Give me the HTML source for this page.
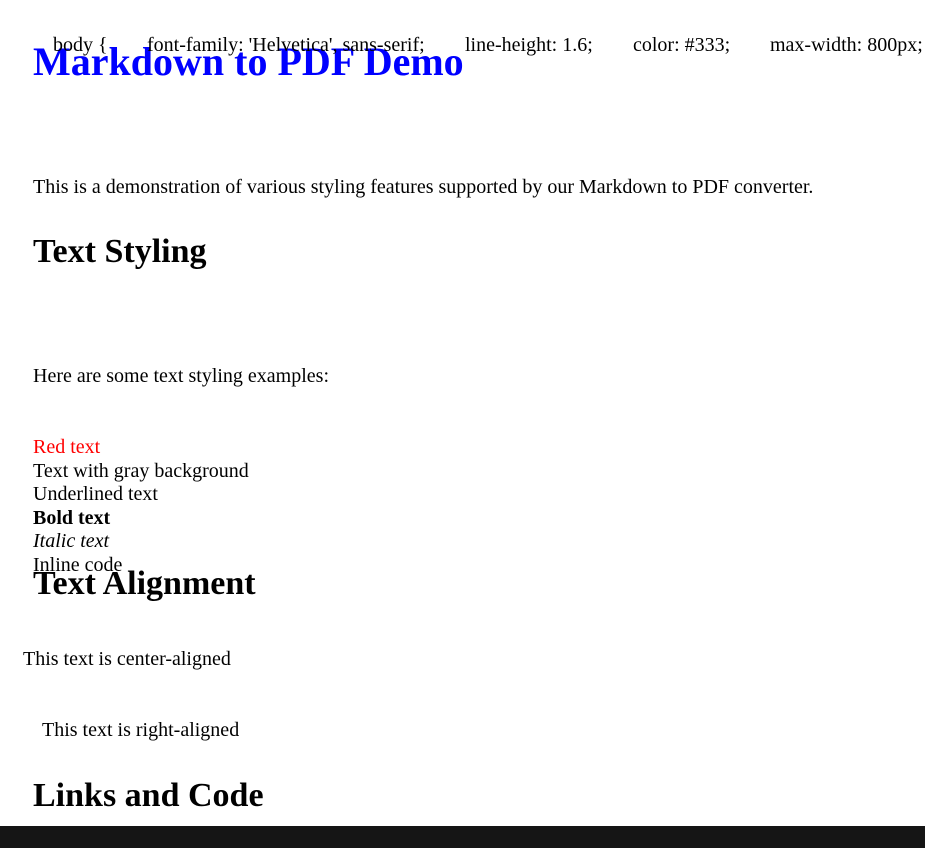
<!DOCTYPE html>
<html><head><style>
body{margin:0;width:925px;height:848px;overflow:hidden;background:#fff;position:relative;font-family:"Liberation Serif",serif;color:#000}
div{position:absolute;white-space:nowrap;font-size:20px;line-height:24px}
.h1{font-size:40px;line-height:44px;font-weight:bold;color:#0000ff}
.h2{font-size:34px;line-height:38px;font-weight:bold}
</style></head><body>
<div class="h1" style="left:33px;top:40px">Markdown to PDF Demo</div>
<div style="left:53px;top:33px">body {</div>
<div style="left:147px;top:33px">font-family: 'Helvetica', sans-serif;</div>
<div style="left:465px;top:33px">line-height: 1.6;</div>
<div style="left:633px;top:33px">color: #333;</div>
<div style="left:770px;top:33px">max-width: 800px;</div>
<div style="left:33px;top:175px">This is a demonstration of various styling features supported by our Markdown to PDF converter.</div>
<div class="h2" style="left:33px;top:233px">Text Styling</div>
<div style="left:33px;top:364px">Here are some text styling examples:</div>
<div style="left:33px;top:435px;color:#ff0000">Red text</div>
<div style="left:33px;top:459px">Text with gray background</div>
<div style="left:33px;top:482px">Underlined text</div>
<div style="left:33px;top:506px;font-weight:bold">Bold text</div>
<div style="left:33px;top:529px;font-style:italic">Italic text</div>
<div style="left:33px;top:553px">Inline code</div>
<div class="h2" style="left:33px;top:565px">Text Alignment</div>
<div style="left:23px;top:647px">This text is center-aligned</div>
<div style="left:42px;top:718px">This text is right-aligned</div>
<div class="h2" style="left:33px;top:777px">Links and Code</div>
<div style="left:0;top:826px;width:925px;height:22px;background:#151515"></div>
</body></html>
